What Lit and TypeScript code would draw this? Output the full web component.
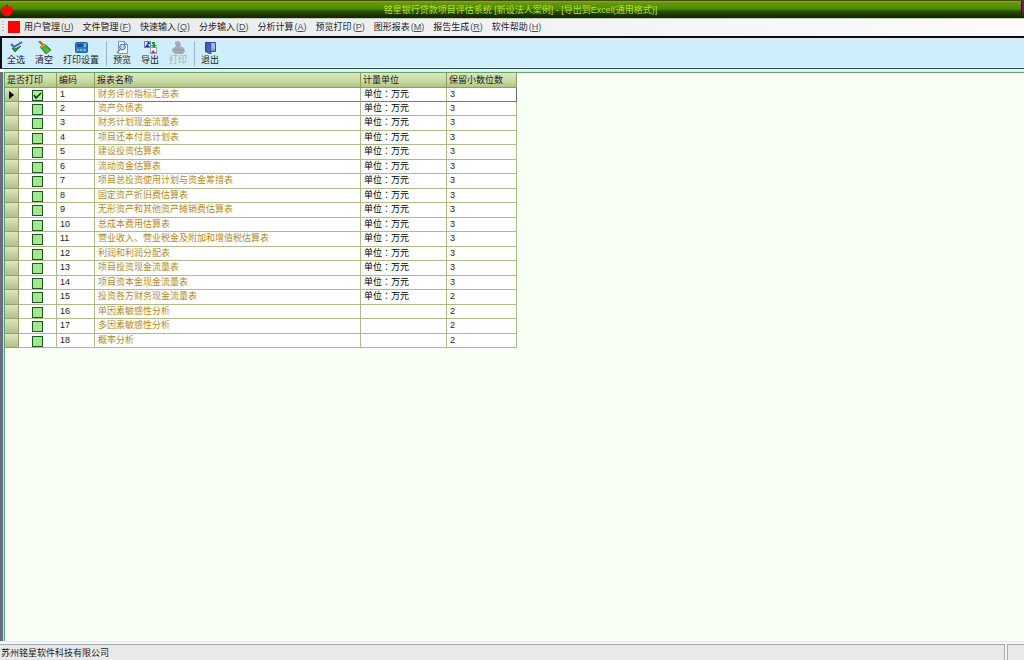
import { LitElement, html, css, svg } from "lit";
import { customElement, state } from "lit/decorators.js";
import { classMap } from "lit/directives/class-map.js";

interface Report {
  name: string;
  unit: string;
  digits: number;
}

const UNIT = "单位：万元";

const REPORTS: Report[] = [
  { name: "财务评价指标汇总表", unit: UNIT, digits: 3 },
  { name: "资产负债表", unit: UNIT, digits: 3 },
  { name: "财务计划现金流量表", unit: UNIT, digits: 3 },
  { name: "项目还本付息计划表", unit: UNIT, digits: 3 },
  { name: "建设投资估算表", unit: UNIT, digits: 3 },
  { name: "流动资金估算表", unit: UNIT, digits: 3 },
  { name: "项目总投资使用计划与资金筹措表", unit: UNIT, digits: 3 },
  { name: "固定资产折旧费估算表", unit: UNIT, digits: 3 },
  { name: "无形资产和其他资产摊销费估算表", unit: UNIT, digits: 3 },
  { name: "总成本费用估算表", unit: UNIT, digits: 3 },
  { name: "营业收入、营业税金及附加和增值税估算表", unit: UNIT, digits: 3 },
  { name: "利润和利润分配表", unit: UNIT, digits: 3 },
  { name: "项目投资现金流量表", unit: UNIT, digits: 3 },
  { name: "项目资本金现金流量表", unit: UNIT, digits: 3 },
  { name: "投资各方财务现金流量表", unit: UNIT, digits: 2 },
  { name: "单因素敏感性分析", unit: "", digits: 2 },
  { name: "多因素敏感性分析", unit: "", digits: 2 },
  { name: "概率分析", unit: "", digits: 2 },
];

const MENUS: [string, string][] = [
  ["用户管理", "U"],
  ["文件管理", "F"],
  ["快速输入", "Q"],
  ["分步输入", "D"],
  ["分析计算", "A"],
  ["预览打印", "P"],
  ["图形报表", "M"],
  ["报告生成", "R"],
  ["软件帮助", "H"],
];

const ICONS: Record<string, unknown> = {
  all: svg`
    <path d="M1 3l3 3 8-5" fill="none" stroke="#4a63ae" stroke-width="2"/>
    <path d="M2 7l3 4 6-6-6 3z" fill="#2f9440" stroke="#23733a" stroke-width="1"/>`,
  clear: svg`
    <path d="M1 0l4 4" stroke="#c8641c" stroke-width="2.4"/>
    <path d="M2 6l5-3 6 6-5 4z" fill="#37a832" stroke="#216e25" stroke-width=".7"/>
    <path d="M2 6l5-3 1 1-5 3z" fill="#e6b238"/>
    <path d="M5 7l5 4M7 6l4 4" stroke="#8ed456" stroke-width=".8"/>`,
  setup: svg`
    <rect x=".5" y="1.5" width="12" height="10" rx="1" fill="#2d7cc8" stroke="#2361a3"/>
    <rect x="2" y="3" width="6" height="3" fill="#1b529a"/>
    <path d="M9 3h2M9 5h2" stroke="#bfe0fa"/>
    <path d="M2 8h2v2H2zM5 8h2v2H5zM8 8h3v2H8z" fill="#6cb0e6"/>`,
  preview: svg`
    <path d="M2.500.5h6l3 3v9h-9z" fill="#f4f8ff" stroke="#7492c4"/>
    <path d="M8.500.5v3h3" fill="#b4c9ec" stroke="#7492c4"/>
    <circle cx="6.500" cy="6" r="2.800" fill="#a9dcf4" stroke="#3f6cb3"/>
    <path d="M4.500 8L1 12" stroke="#c08850" stroke-width="1.800"/>`,
  export: svg`
    <rect x=".5" y=".5" width="6" height="6" fill="#dceafb" stroke="#6485bb"/>
    <path d="M1 6l2-3 3 3z" fill="#1c3975"/>
    <rect x="6.500" y="6.500" width="6" height="6" fill="#f3f5fc" stroke="#8b9ac4"/>
    <path d="M7 12l2-3 3 3z" fill="#b83a58"/>
    <path d="M8 1h3v3h2l-3 3-3-3h2V3H8z" fill="#229a32"/>
    <circle cx="4.500" cy="2.200" r="1.200" fill="#19285e"/>`,
  print: svg`
    <path d="M3 1l2-1 3 1 1 3-1 1 4 2 1 3-2 3H3L0 10V8l3-2 1-1-1-2z" fill="#a5adb3"/>
    <path d="M2 9h9" stroke="#929ba3"/>`,
  exit: svg`
    <path d="M1.500 1.500h10v9h-10z" fill="#b9d2f2" stroke="#3e4f96"/>
    <path d="M2 1l5 1.500V13l-5-2z" fill="#4860c4" stroke="#2f3c88" stroke-width=".7"/>
    <path d="M8 2h3v8H8z" fill="#9db9e6"/>
    <path d="M8 8h3v2H8z" fill="#5fae7c"/>`,
};

@customElement("app-root")
export class AppRoot extends LitElement {
  @state() private checked: boolean[] = REPORTS.map((_, i) => i === 0);
  @state() private current = 0;

  static styles = css`
    :host {
      display: flex;
      flex-direction: column;
      min-height: 100vh;
      background: #fafff5;
      color: #1c1c1c;
      font: 9px/12px "Liberation Sans", "Noto Sans CJK SC", sans-serif;
    }
    * {
      box-sizing: border-box;
    }
    button {
      padding: 0;
      border: 0;
      background: none;
      color: inherit;
      font: inherit;
      white-space: nowrap;
    }
    .title {
      display: grid;
      grid-template-columns: 20px 1fr 3px;
      align-items: center;
      height: 18px;
      border-top: 1px solid #4a4a08;
      background: linear-gradient(#8aa63a 0, #5f9a06 2px, #4f8805 8px, #2b5205 10px, #1b3403 14px, #142600 17px);
      color: #b4e236;
    }
    .title h1 {
      margin: 0;
      font: inherit;
      text-align: center;
    }
    .apple {
      display: block;
      margin-left: 1px;
    }
    .corner {
      justify-self: end;
      align-self: start;
      width: 3px;
      height: 12px;
      background: #7a1268;
      border-left: 1px solid #3a0433;
    }
    .menu {
      display: flex;
      align-items: center;
      gap: 9px;
      height: 18px;
      padding: 0 0 1px 2px;
      border-top: 1px solid #c3cdb4;
      background: linear-gradient(90deg, #e9e9ec, #f1f2f3 50%, #fbfbfc);
    }
    .grip {
      width: 2px;
      height: 12px;
      margin-right: -5px;
      background: repeating-linear-gradient(#b9bcc4 0 1px, transparent 1px 3px);
    }
    .square {
      width: 12px;
      height: 12px;
      margin-right: -5px;
      background: #fb0505;
    }
    .key {
      margin-left: 1px;
      color: #4a525c;
    }
    .tools {
      display: flex;
      align-items: center;
      height: 33px;
      border: solid #0a0f14;
      border-width: 2px 0 1px 2px;
      border-bottom-color: #2c3c4c;
      background: #cfedfa;
      box-shadow: inset 0 1px #e6e4e4, inset 0 -1px #ecfaff;
    }
    .group {
      display: flex;
      gap: 10px;
      padding: 0 7px 0 5px;
    }
    .group + .group {
      padding-left: 6px;
      border-left: 1px solid #a3b4c0;
    }
    .tool {
      display: flex;
      flex-direction: column;
      align-items: center;
    }
    .tool svg {
      display: block;
    }
    .tool:disabled {
      color: #a3adb3;
    }
    .work {
      flex: 1;
      margin: 3px 0 0 4px;
      border-top: 1px solid #62a865;
      border-left: 1px solid #5da077;
      box-shadow: 0 -2px #d5f3ec, -1px 0 #c5e3dd, -4px 0 #66707c;
    }
    table {
      width: 512px;
      table-layout: fixed;
      border-collapse: separate;
      border-spacing: 0;
    }
    .c-mark { width: 14px; }
    .c-check { width: 38px; }
    .c-code { width: 38px; }
    .c-name { width: 266px; }
    .c-unit { width: 86px; }
    .c-digits { width: 70px; }
    th,
    td {
      height: 14px;
      padding: 0 0 0 3px;
      border: solid #aeb98c;
      border-width: 0 1px 1px 0;
      text-align: left;
      vertical-align: top;
      font-weight: normal;
      line-height: 12px;
      white-space: nowrap;
      overflow: hidden;
    }
    th {
      height: 15px;
      padding: 1px 0 0 2px;
      border-color: #8c9e63;
      background: linear-gradient(#dbe7bd, #c9d9a1 60%, #b1c485);
    }
    td {
      background: #fff;
    }
    tr:nth-child(odd) td {
      height: 15px;
    }
    tbody tr:first-child td {
      height: 14px;
    }
    .mark {
      padding: 0;
      background: linear-gradient(#dde6c0, #b2c088);
      border-color: #93a36d;
    }
    .mark svg {
      display: block;
      margin: 3px auto 0;
    }
    .check {
      padding: 0;
      text-align: center;
    }
    .check input {
      appearance: none;
      display: block;
      width: 11px;
      height: 11px;
      margin: 2px auto 0;
      border: 1px solid #1e5525;
      background: #a0e88e;
    }
    .check input:checked {
      background: #b0efa2 url("data:image/svg+xml,%3Csvg xmlns='http://www.w3.org/2000/svg' viewBox='0 0 9 9'%3E%3Cpath d='M1 4l2 3 5-5' fill='none' stroke='%23113311' stroke-width='1.500'/%3E%3C/svg%3E");
    }
    .name {
      color: #b08a26;
    }
    .unit {
      color: #000;
      font-family: "Noto Sans CJK TC", sans-serif;
    }
    .current td:not(.mark) {
      border-bottom: 1px solid #777;
    }
    .current td:last-child {
      border-right-color: #666;
    }
    .status {
      display: grid;
      grid-template-columns: 1fr 17px;
      gap: 2px;
      height: 19px;
      padding-top: 2px;
      border-top: 1px solid #dcebe8;
      background: #f4f8f8;
    }
    .pane {
      padding: 2px 0 0 1px;
      border: solid #a9aaac;
      border-width: 1px 0 0;
      background: #e9e9eb;
    }
    .pane:first-child {
      border-right-width: 1px;
    }
    .pane:last-child {
      border-left-width: 1px;
    }
  `;

  private setAll(value: boolean) {
    this.checked = REPORTS.map(() => value);
  }

  private toggle(index: number) {
    this.checked = this.checked.map((v, i) => (i === index ? !v : v));
  }

  private tool(icon: string, label: string, action?: () => void, disabled = false) {
    return html`<button class="tool" ?disabled=${disabled} @click=${action}>
      <svg width="13" height="13" viewBox="0 0 13 13" aria-hidden="true">${ICONS[icon]}</svg>
      <span>${label}</span>
    </button>`;
  }

  private row(report: Report, i: number) {
    const active = i === this.current;
    return html`<tr class=${classMap({ current: active })} @click=${() => (this.current = i)}>
      <td class="mark">
        ${active
          ? html`<svg width="5" height="8" viewBox="0 0 5 8" aria-hidden="true"><path d="M0 0l5 4-5 4z" fill="#000" /></svg>`
          : ""}
      </td>
      <td class="check">
        <input type="checkbox" aria-label=${report.name} .checked=${this.checked[i]} @change=${() => this.toggle(i)} />
      </td>
      <td>${i + 1}</td>
      <td class="name">${report.name}</td>
      <td class="unit">${report.unit}</td>
      <td>${report.digits}</td>
    </tr>`;
  }

  render() {
    return html`
      <header class="title">
        <svg class="apple" width="12" height="12" viewBox="0 0 12 12" aria-hidden="true">
          <path d="M6 3l2-1 3 1 1 3-2 5-2 1H4L1 10 0 6l1-3 3-1z" fill="#f50a08" />
          <path d="M5 3l1-3 1 1-1 2z" fill="#5c1600" />
        </svg>
        <h1>铭星银行贷款项目评估系统 [新设法人案例] - [导出到Excel(通用格式)]</h1>
        <span class="corner"></span>
      </header>
      <nav class="menu">
        <span class="grip"></span>
        <span class="square"></span>
        ${MENUS.map(([label, key]) => html`<button>${label}<span class="key">(<u>${key}</u>)</span></button>`)}
      </nav>
      <div class="tools" role="toolbar">
        <div class="group">
          ${this.tool("all", "全选", () => this.setAll(true))}
          ${this.tool("clear", "清空", () => this.setAll(false))}
          ${this.tool("setup", "打印设置")}
        </div>
        <div class="group">
          ${this.tool("preview", "预览")} ${this.tool("export", "导出")}
          ${this.tool("print", "打印", undefined, true)}
        </div>
        <div class="group">${this.tool("exit", "退出")}</div>
      </div>
      <main class="work">
        <table>
          <colgroup>
            <col class="c-mark" /><col class="c-check" /><col class="c-code" />
            <col class="c-name" /><col class="c-unit" /><col class="c-digits" />
          </colgroup>
          <thead>
            <tr>
              <th colspan="2">是否打印</th>
              <th>编码</th>
              <th>报表名称</th>
              <th>计量单位</th>
              <th>保留小数位数</th>
            </tr>
          </thead>
          <tbody>
            ${REPORTS.map((r, i) => this.row(r, i))}
          </tbody>
        </table>
      </main>
      <footer class="status">
        <div class="pane">苏州铭星软件科技有限公司</div>
        <div class="pane"></div>
      </footer>
    `;
  }
}
